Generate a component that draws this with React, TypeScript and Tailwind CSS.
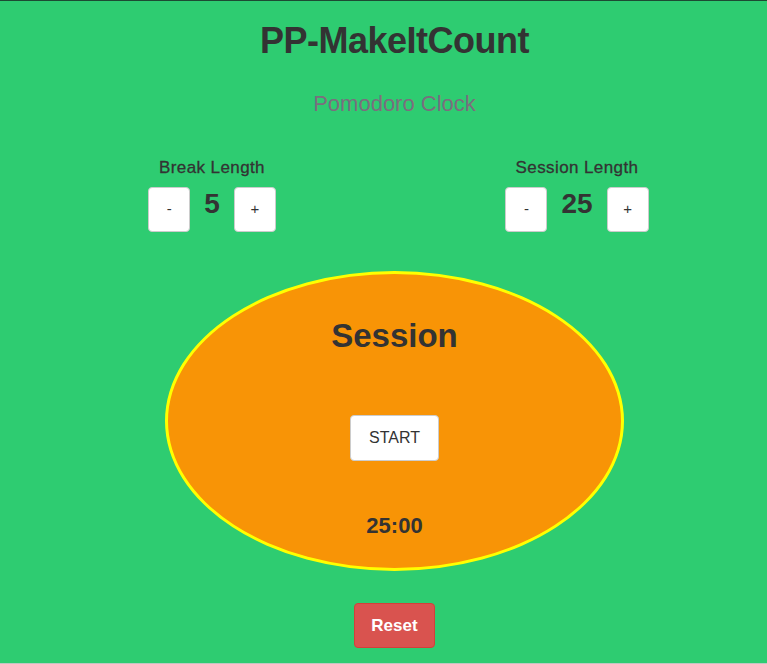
import React, { useState } from 'react';

const font = { fontFamily: '"Liberation Sans", Arial, sans-serif' };

const StepButton: React.FC<{ label: string; onClick: () => void }> = ({ label, onClick }) => (
  <button
    onClick={onClick}
    className="w-[42px] h-[45px] bg-white border border-[#cccccc] rounded-[4px] text-[#333] text-[15px] flex items-center justify-center"
  >
    {label}
  </button>
);

const LengthControl: React.FC<{ title: string; value: number; setValue: (n: number) => void }> = ({
  title,
  value,
  setValue,
}) => (
  <div className="w-[170px] flex flex-col items-center">
    <div className="text-[17px] leading-[20px] text-[#333] tracking-[0.4px] [-webkit-text-stroke:0.3px_#333]">{title}</div>
    <div className="mt-[9px] flex items-center">
      <StepButton label="-" onClick={() => setValue(Math.max(1, value - 1))} />
      <span className="mx-[14px] text-[28px] font-bold text-[#333] leading-none -mt-[12px]">{value}</span>
      <StepButton label="+" onClick={() => setValue(value + 1)} />
    </div>
  </div>
);

export default function App() {
  const [breakLen, setBreakLen] = useState(5);
  const [sessionLen, setSessionLen] = useState(25);

  return (
    <div style={font} className="min-h-[664px] bg-[#2ecc71] border-t border-[#1d4a33] border-b-[1px] border-b-[#bfc7c2]">
      <div className="pl-[22px] flex flex-col items-center">
        <h1 className="mt-[20px] text-[36px] leading-[40px] font-bold text-[#333] tracking-[-0.5px]">PP-MakeItCount</h1>
        <h2 className="mt-[30px] text-[22px] leading-[26px] text-[#7b6e7e]">Pomodoro Clock</h2>

        <div className="mt-[41px] flex gap-[195px]">
          <LengthControl title="Break Length" value={breakLen} setValue={setBreakLen} />
          <LengthControl title="Session Length" value={sessionLen} setValue={setSessionLen} />
        </div>

        <div className="mt-[39px] w-[459px] h-[300px] rounded-[50%] border-[3px] border-[#ffff00] bg-[#f89406] flex flex-col items-center">
          <div className="mt-[42px] text-[33px] leading-[40px] font-bold text-[#333]">Session</div>
          <button className="mt-[59px] w-[89px] h-[46px] bg-white border border-[#cccccc] rounded-[4px] text-[16px] text-[#333]">
            START
          </button>
          <div className="mt-[52px] text-[22px] leading-[26px] font-bold text-[#333]">{sessionLen}:00</div>
        </div>

        <button className="mt-[32px] w-[81px] h-[45px] bg-[#d9534f] border border-[#d43f3a] rounded-[4px] text-white text-[17px] font-bold">
          Reset
        </button>
      </div>
    </div>
  );
}
